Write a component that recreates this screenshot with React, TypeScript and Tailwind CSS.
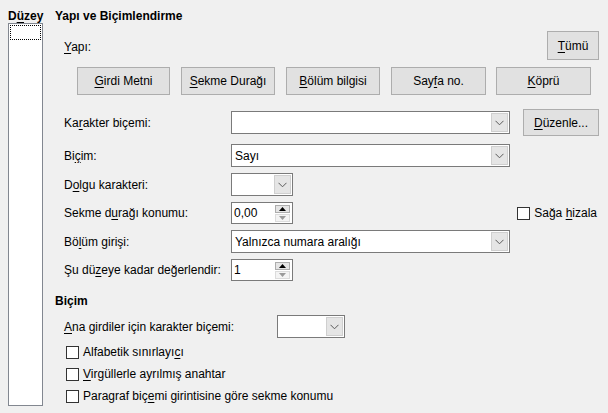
import type { FC, ReactNode } from "react";

const Chevron: FC = () => (
  <svg width="9" height="6" viewBox="0 0 9 6">
    <polyline points="0.5,0.8 4.5,4.8 8.5,0.8" fill="none" stroke="#5a5a5a" strokeWidth="1" />
  </svg>
);

const Combo: FC<{ w: string; text?: string }> = ({ w, text }) => (
  <div className={`${w} h-[23px] flex border border-[#7a7a7a] bg-white`}>
    <div className="flex-1 flex items-center pl-[3px]">{text}</div>
    <div className="w-[17px] m-[1px] flex items-center justify-center bg-[#e5e5e5] border border-[#cfcfcf]">
      <Chevron />
    </div>
  </div>
);

const Spin: FC<{ value: string }> = ({ value }) => (
  <div className="w-[62px] h-[22px] flex border border-[#7a7a7a] bg-white">
    <div className="flex-1 flex items-center pl-[2px]">{value}</div>
    <div className="w-[15px] mr-[2px] flex flex-col justify-center gap-[1px]">
      <div className="h-[8px] flex items-center justify-center bg-[#e5e5e5] border border-[#adadad]">
        <svg width="7" height="4" viewBox="0 0 7 4">
          <polygon points="3.5,0 7,4 0,4" fill="#000" />
        </svg>
      </div>
      <div className="h-[8px] flex items-center justify-center bg-[#f4f4f4] border border-[#dcdcdc]">
        <svg width="7" height="4" viewBox="0 0 7 4">
          <polygon points="0,0 7,0 3.5,4" fill="#9a9a9a" />
        </svg>
      </div>
    </div>
  </div>
);

const Button: FC<{ w: string; h?: string; children: ReactNode }> = ({ w, h = "h-[28px]", children }) => (
  <div className={`${w} ${h} flex items-center justify-center bg-[#e1e1e1] border border-[#adadad]`}>
    {children}
  </div>
);

const Check: FC<{ children: ReactNode }> = ({ children }) => (
  <div className="flex items-center gap-[4px]">
    <div className="w-[13px] h-[13px] border border-[#333] bg-white" />
    <span>{children}</span>
  </div>
);

const Row: FC<{ h: string; label: ReactNode; children: ReactNode }> = ({ h, label, children }) => (
  <div className={`${h} flex items-center`}>
    <div className="w-[176px] pl-[9px]">{label}</div>
    {children}
  </div>
);

const U: FC<{ children: ReactNode }> = ({ children }) => (
  <u className="underline-offset-[2px]">{children}</u>
);

const App: FC = () => {
  return (
    <div className="w-[608px] h-[413px] bg-[#f0f0f0] flex font-['Liberation_Sans',Arial,sans-serif] text-[12px] leading-[14px] text-black">
      <div className="w-[55px] pl-[8px] pt-[9px] flex flex-col">
        <div className="font-bold h-[14px]">
          D<U>ü</U>zey
        </div>
        <div className="w-[35px] h-[383px] border border-[#828790] bg-white p-[1px]">
          <div className="h-[15px] border border-dotted border-black" />
        </div>
      </div>

      <div className="flex-1 pr-[9px] pt-[9px] flex flex-col">
        <div className="font-bold h-[14px]">Yapı ve Biçimlendirme</div>

        <div className="mt-[8px] h-[29px] flex items-center justify-between pl-[9px]">
          <span className="pt-[3px]">
            <U>Y</U>apı:
          </span>
          <Button w="w-[52px]" h="h-[29px]">
            <span>
              <U>T</U>ümü
            </span>
          </Button>
        </div>

        <div className="mt-[7px] pl-[22px] flex gap-[11px]">
          <Button w="w-[93px]">
            <span>
              <U>G</U>irdi Metni
            </span>
          </Button>
          <Button w="w-[94px]">
            <span>
              <U>S</U>ekme Durağı
            </span>
          </Button>
          <Button w="w-[94px]">
            <span>
              <U>B</U>ölüm bilgisi
            </span>
          </Button>
          <Button w="w-[95px]">
            <span>
              Say<U>f</U>a no.
            </span>
          </Button>
          <div className="-ml-[1px]">
            <Button w="w-[95px]">
              <span>
                <U>K</U>öprü
              </span>
            </Button>
          </div>
        </div>

        <div className="mt-[13px] flex flex-col">
          <Row
            h="h-[29px]"
            label={
              <span>
                Ka<U>r</U>akter biçemi:
              </span>
            }
          >
            <Combo w="w-[279px]" />
            <div className="ml-[13px]">
              <Button w="w-[76px]" h="h-[27px]">
                <span>
                  <U>D</U>üzenle...
                </span>
              </Button>
            </div>
          </Row>
          <div className="mt-[4px]" />
          <Row
            h="h-[29px]"
            label={
              <span>
                Bi<U>ç</U>im:
              </span>
            }
          >
            <Combo w="w-[279px]" text="Sayı" />
          </Row>
          <Row
            h="h-[29px]"
            label={
              <span>
                D<U>o</U>lgu karakteri:
              </span>
            }
          >
            <Combo w="w-[62px]" />
          </Row>
          <Row
            h="h-[28px]"
            label={
              <span>
                Sekme d<U>u</U>rağı konumu:
              </span>
            }
          >
            <Spin value="0,00" />
            <div className="ml-auto pr-[2px]">
              <Check>
                Sağa <U>h</U>izala
              </Check>
            </div>
          </Row>
          <Row
            h="h-[29px]"
            label={
              <span>
                Bö<U>l</U>üm girişi:
              </span>
            }
          >
            <Combo w="w-[279px]" text="Yalnızca numara aralığı" />
          </Row>
          <Row
            h="h-[28px]"
            label={
              <span>
                Şu dü<U>z</U>eye kadar değerlendir:
              </span>
            }
          >
            <Spin value="1" />
          </Row>
        </div>

        <div className="mt-[10px] font-bold h-[14px]">Biçim</div>

        <div className="mt-[4px] h-[29px] flex items-center">
          <div className="w-[222px] pl-[9px]">
            <U>A</U>na girdiler için karakter biçemi:
          </div>
          <Combo w="w-[68px]" />
        </div>

        <div className="pl-[11px] flex flex-col">
          <div className="h-[22px] flex items-center">
            <Check>
              Alfabetik sınırlayı<U>c</U>ı
            </Check>
          </div>
          <div className="h-[22px] flex items-center">
            <Check>
              <U>V</U>irgüllerle ayrılmış anahtar
            </Check>
          </div>
          <div className="h-[22px] flex items-center">
            <Check>
              Paragraf biç<U>e</U>mi girintisine göre sekme konumu
            </Check>
          </div>
        </div>
      </div>
    </div>
  );
};

export default App;
